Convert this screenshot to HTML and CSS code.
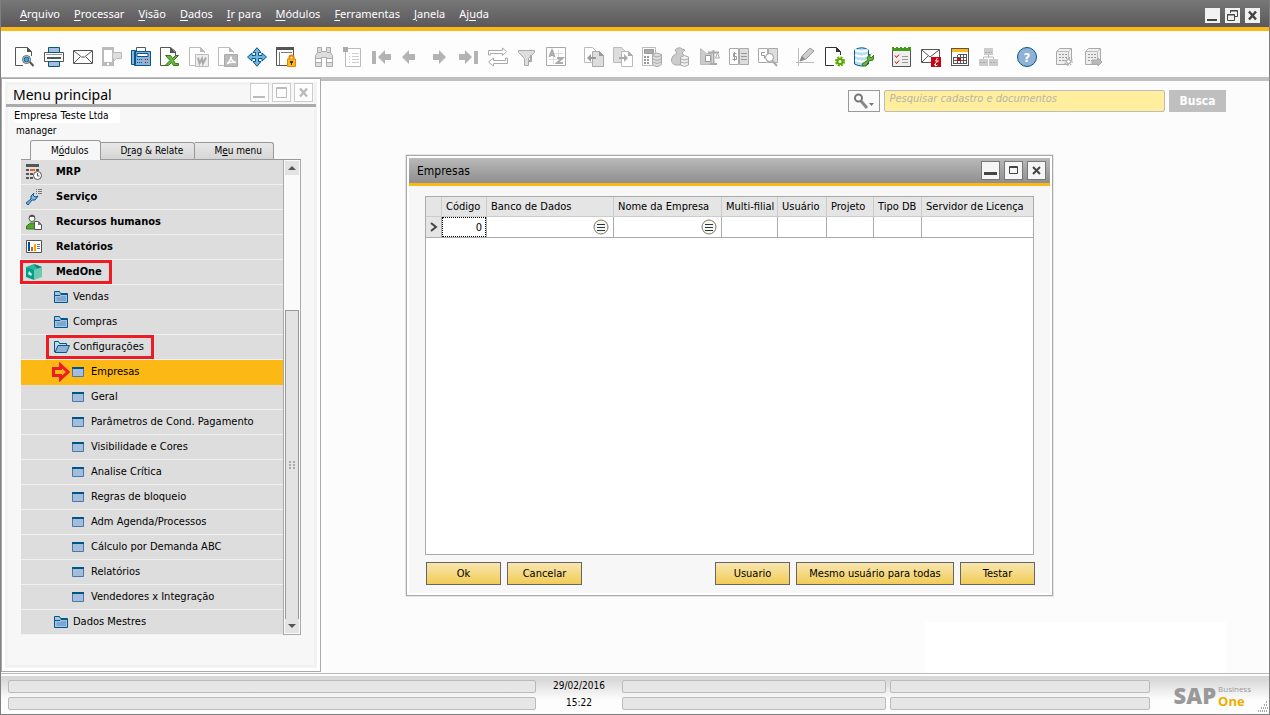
FILE: index.html
```html
<!DOCTYPE html>
<html lang="pt-BR">
<head>
    <meta charset="UTF-8">
    <meta name="viewport" content="width=device-width, initial-scale=1.0">
    <title>SAP Business One</title>
    <link rel="stylesheet" href="styles.css">
</head>
<body>
    <!-- Shared icons -->
    <svg class="sprite" aria-hidden="true">
        <symbol id="folder" viewBox="0 0 14 12">
            <path d="M.5 11.500V.5h5l1 2h7v9z" fill="#a8c4de" stroke="#00588c"/>
            <path d="M1 4.500h5l1-1h6" fill="none" stroke="#00588c"/>
            <path d="M2.500 6h4l1-1h4.500v5h-9.500z" fill="#7fa6cc"/>
        </symbol>
        <symbol id="folder-open" viewBox="0 0 16 12">
            <path d="M.5 11V.5h4l1 2h7v2" fill="#c5d8ea" stroke="#00588c"/>
            <path d="M1 11.500l3-7h11.500l-3 7z" fill="#8fb2d6" stroke="#00588c"/>
        </symbol>
        <symbol id="form" viewBox="0 0 12 10">
            <path d="M.5 1h11v8.500H.5z" fill="#a3bddb" stroke="#4a78a8"/>
            <path d="M0 0h12v2H0z" fill="#005587"/>
        </symbol>
        <symbol id="minimize" viewBox="0 0 15 13"><path d="M1 10h12v2H1z" fill="currentColor"/></symbol>
        <symbol id="close" viewBox="0 0 15 13"><path d="M4 2.500l7 8M11 2.500l-7 8" stroke="currentColor" stroke-width="2.500"/></symbol>
        <symbol id="link" viewBox="0 0 16 16">
            <circle cx="8" cy="8" r="7" fill="#fbf8e6" stroke="#777"/>
            <path d="M4 5.500h8M4 8.500h8M4 11.500h8" stroke="#1d3557" shape-rendering="crispEdges"/>
        </symbol>
    </svg>

    <header>
        <nav class="menubar">
            <a href="#"><u>A</u>rquivo</a>
            <a href="#"><u>P</u>rocessar</a>
            <a href="#"><u>V</u>isão</a>
            <a href="#"><u>D</u>ados</a>
            <a href="#"><u>I</u>r para</a>
            <a href="#"><u>M</u>ódulos</a>
            <a href="#"><u>F</u>erramentas</a>
            <a href="#"><u>J</u>anela</a>
            <a href="#">Aj<u>u</u>da</a>
            <div class="app-controls">
                <button aria-label="Minimizar"><svg viewBox="0 0 15 13"><path d="M2 10h10v2H2z" fill="#444"/></svg></button>
                <button aria-label="Restaurar"><svg viewBox="0 0 15 13" fill="none" stroke="#444"><path d="M5.500 4V1.500h7v6H10M5 2h8"/><path d="M2.500 5.500h7v6h-7zM2 6h8"/></svg></button>
                <button aria-label="Fechar"><svg><use href="#close"/></svg></button>
            </div>
        </nav>

        <div class="toolbar">
            <div class="group">
                <button aria-label="Visualizar"><svg viewBox="0 0 20 20"><path d="M8 18.500H.5V.5h12l4 4V9" fill="#fff" stroke="#555"/><path d="M12 0v5h5z" fill="#555"/><path d="M14 14l4.500 5" stroke="#555" stroke-width="2"/><circle cx="11.500" cy="12.500" r="4" fill="#fff" stroke="#555"/><circle cx="11.500" cy="12.500" r="2.500" fill="#4f9fd0" stroke="#00588c"/></svg></button>
                <button aria-label="Imprimir"><svg viewBox="0 0 20 20"><path d="M.5 5.500h19v9H.5z" fill="#fff" stroke="#555"/><path d="M4.500.5h11v5h-11z" fill="#a3bddb" stroke="#00588c"/><path d="M2 7.500h16" stroke="#999"/><path d="M3 10h14v2H3z" fill="#555"/><path d="M4.500 14.500h11v5h-11z" fill="#a3bddb" stroke="#00588c"/></svg></button>
                <button aria-label="Enviar e-mail"><svg viewBox="0 0 20 20" fill="none" stroke="#555"><path d="M.5 3.500h19v13H.5z" fill="#fff"/><path d="M1 4l7.500 6h3L19 4M1 16l6-6M19 16l-6-6"/></svg></button>
                <button aria-label="Enviar SMS" disabled><svg viewBox="0 0 20 20"><path d="M1 1h10v17H1z" fill="#fff" stroke="#bbb" stroke-width="2"/><path d="M0 0h12v3H0zM0 15h12v4H0z" fill="#bbb"/><path d="M5 16h2v2H5z" fill="#fff"/><path d="M10.500 5.500h9v6h-5l-3 3v-3h-1z" fill="#ddd" stroke="#bbb"/></svg></button>
                <button aria-label="Enviar fax"><svg viewBox="0 0 20 20"><path d="M5.500.5h9v4h-9z" fill="#fff" stroke="#555"/><path d="M.5 3.500h4v14h-4zM3.500 4.500h16v14h-16z" fill="#8fb2d6" stroke="#00588c"/><path d="M6 6.500h11v3H6z" fill="#fff" stroke="#00588c"/><path d="M6 12.500h6M6 15.500h6" stroke="#00588c" stroke-dasharray="1 1"/><path d="M14 12.500h1m1 0h1M14 15.500h1" stroke="#d00000"/><path d="M16 15.500h1" stroke="#2a8a00"/></svg></button>
                <button aria-label="Exportar para Excel"><svg viewBox="0 0 20 20"><path d="M5 18.500H.5V.5h10l5 4V9" fill="#fff" stroke="#555"/><path d="M10 0v6h6z" fill="#555"/><path d="M5.500 8.500h5l2 3 3-3h3l-5 5 2 3h3v2h-5l-2-3-3 3H5l5-5z" fill="#6cb33f" stroke="#2f7d12"/></svg></button>
                <button aria-label="Exportar para Word" disabled><svg viewBox="0 0 20 20"><path d="M6 18.500H.5V.5h11l4 4V6" fill="#fff" stroke="#bbb"/><path d="M11 0v5h5z" fill="#bbb"/><path d="M6.500 7.500h13v12h-13z" fill="#eee" stroke="#bbb"/><path d="M9 10.500l1.500 6 2.500-5 1 5 3-6" fill="none" stroke="#aaa" stroke-width="2"/></svg></button>
                <button aria-label="Exportar para PDF" disabled><svg viewBox="0 0 20 20"><path d="M6 18.500H.5V.5h11l4 4V6" fill="#fff" stroke="#bbb"/><path d="M11 0v5h5z" fill="#bbb"/><path d="M6.500 7.500h13v12h-13z" fill="#bbb" stroke="#aaa"/><path d="M9 16.500q4-3 4-7 0 5 5 6-5-1-9 1" fill="none" stroke="#fff" stroke-width="1.500"/></svg></button>
                <button aria-label="Iniciar aplicação"><svg viewBox="0 0 20 20"><path d="M10 .7l4 4.800h-2.500v3h3.500v-2.500l4.500 4-4.500 4v-2.500h-3.500v3H14l-4 4.800-4-4.800h2.500v-3H5V14L.5 10 5 6v2.500h3.500v-3H6z" fill="#72b6e6" stroke="#00588c"/></svg></button>
                <button aria-label="Bloquear tela"><svg viewBox="0 0 20 20"><path d="M.5.5h17v18H.5z" fill="#fff" stroke="#555"/><path d="M0 0h18v3H0z" fill="#555"/><path d="M3.500 5v13M5 5.500h11" stroke="#777"/><path d="M13.500 12V9.500q2-2 4 0V12" fill="none" stroke="#e98300" stroke-width="2"/><path d="M11.500 12h8v7.500h-8z" fill="#fcb814" stroke="#e98300"/><path d="M14 14h3v2h-1v2h-1v-2h-1z" fill="#333"/></svg></button>
            </div>
            <div class="group">
                <button aria-label="Procurar" disabled><svg viewBox="0 0 20 20"><path d="M3.500.5h4v4h5v-4h4v5l2 3v11h-6v-9h-5v9h-6v-11l2-3z" fill="#ddd" stroke="#aaa"/><path d="M2 12h5v3H2zM13 12h5v3h-5z" fill="#fff"/><path d="M2 11.500h5M13 11.500h5M2 15.500h5M13 15.500h5M4 5.500h3M13 5.500h3" stroke="#aaa"/></svg></button>
                <button aria-label="Adicionar" disabled><svg viewBox="0 0 20 20"><path d="M2.500 1.500h15v18h-15z" fill="#fff" stroke="#bbb"/><path d="M0 0h5v5H0z" fill="#aaa"/><path d="M6 6.500h1m2 0h7M6 9.500h1m2 0h7M6 12.500h1m2 0h7M6 15.500h1m2 0h7" stroke="#ccc"/></svg></button>
                <button aria-label="Primeiro registro" disabled><svg viewBox="0 0 20 20" fill="#b3b3b3"><path d="M0 4h4v13H0zM6 10l7-7v4h6v6h-6v4z"/></svg></button>
                <button aria-label="Registro anterior" disabled><svg viewBox="0 0 20 20" fill="#b3b3b3"><path d="M1 10l7-7v4h6v6H8v4z"/></svg></button>
                <button aria-label="Próximo registro" disabled><svg viewBox="0 0 20 20" fill="#b3b3b3"><path d="M16 10L9 3v4H3v6h6v4z"/></svg></button>
                <button aria-label="Último registro" disabled><svg viewBox="0 0 20 20" fill="#b3b3b3"><path d="M15 4h4v13h-4zM13 10L6 3v4H0v6h6v4z"/></svg></button>
                <button aria-label="Atualizar" disabled><svg viewBox="0 0 20 20" fill="#fff" stroke="#aaa"><path d="M.5 8V3.500h14V1l4 3.500-4 4V6.500h-12V8zM19.500 11v5.500h-14V19l-5-4 5-4v2.500h12V11z"/></svg></button>
                <button aria-label="Filtrar" disabled><svg viewBox="0 0 20 20"><path d="M1.500 3.500h16v2l-6 6v7h-4v-7l-6-6z" fill="#ddd" stroke="#aaa"/><path d="M12 14h2V8" fill="none" stroke="#aaa" stroke-width="2"/></svg></button>
                <button aria-label="Ordenar" disabled><svg viewBox="0 0 20 20"><path d="M.5.5h19v18H.5z" fill="#fff" stroke="#aaa"/><path d="M3 6.500h14M3 12.500h14M7.500 3v14M12.500 3v14" stroke="#ddd"/><path d="M3.500 10L6 3.500 8.500 10M4 8h4M11 11h5.500L11 16h6" fill="none" stroke="#aaa" stroke-width="2"/></svg></button>
            </div>
            <div class="group">
                <button aria-label="Documento base" disabled><svg viewBox="0 0 20 20"><path d="M.5.5h8l4 4v11H.5z" fill="#fff" stroke="#bbb"/><path d="M8.500 4.500h7l4 4v11h-11z" fill="#ddd" stroke="#aaa"/><path d="M15 4v5h5zM3 11l4-4v3h5v2H7v3z" fill="#999"/></svg></button>
                <button aria-label="Documento destino" disabled><svg viewBox="0 0 20 20"><path d="M.5.5h8l4 4v11H.5z" fill="#ddd" stroke="#bbb"/><path d="M8.500 4.500h7l4 4v11h-11z" fill="#fff" stroke="#bbb"/><path d="M15 4v5h5zM15 11l-4-4v3H6v2h5v3z" fill="#aaa"/></svg></button>
                <button aria-label="Lucro bruto" disabled><svg viewBox="0 0 20 20"><path d="M.5.5h13v18H.5z" fill="#fff" stroke="#bbb"/><path d="M2.500 2.500h9v4h-9z" fill="#aaa" stroke="#999"/><path d="M2 10h6M2 13h6M2 16h6" stroke="#999" stroke-width="2" stroke-dasharray="2 1"/><path d="M10.500 7.500q4.500-3 9 0v10q-4.500 4-9 0z" fill="#ddd" stroke="#aaa"/><path d="M10.500 8.500q4.500 3 9 0M10.500 12q4.500 3 9 0M10.500 15q4.500 3 9 0" fill="none" stroke="#aaa"/></svg></button>
                <button aria-label="Meios de pagamento" disabled><svg viewBox="0 0 20 20"><path d="M4 3q4-4 7-1l3 1-3 3q5 4 3 12H4q-6-3-2-9l4-3z" fill="#ccc" stroke="#aaa"/><path d="M9.500 10q4-3 8 0v8q-4 3-8 0z" fill="#eee" stroke="#aaa"/><path d="M9.500 12q4 2 8 0M9.500 15q4 2 8 0" fill="none" stroke="#aaa"/></svg></button>
                <button aria-label="Volume e peso" disabled><svg viewBox="0 0 20 20"><path d="M.5 17.500v-16l6 5h5v11z" fill="#ccc" stroke="#bbb"/><path d="M5.500 8.500h5v6h-5z" fill="#fff" stroke="#999"/><path d="M13.500 3v14M8 5.500h11M10 17h7" stroke="#aaa" stroke-width="2"/><path d="M15.500 11l2-5 2 5z" fill="#fff" stroke="#aaa"/></svg></button>
                <button aria-label="Diário" disabled><svg viewBox="0 0 20 20"><path d="M.5 1.500h9v16h-9z" fill="#fff" stroke="#aaa"/><path d="M10.500 1.500h9v16h-9z" fill="#ddd" stroke="#aaa"/><path d="M7.500 6.500h-3v3h3v3h-4M5.500 5v9M12 6.500h6M12 9.500h6M12 12.500h6" fill="none" stroke="#999"/></svg></button>
                <button aria-label="Visualizar diário" disabled><svg viewBox="0 0 20 20"><path d="M.5 1.500h9v14h-9z" fill="#fff" stroke="#aaa"/><path d="M10.500 1.500h9v14h-9z" fill="#ddd" stroke="#aaa"/><path d="M7 5.500H3.500v3h3v3" fill="none" stroke="#999"/><circle cx="11.500" cy="10.500" r="4" fill="#fff" stroke="#999"/><path d="M14.500 14l4.500 5" stroke="#aaa" stroke-width="2"/></svg></button>
            </div>
            <div class="group">
                <button aria-label="Editor de layout" disabled><svg viewBox="0 0 20 20"><path d="M2.500 1v18M0 15.500h18" fill="none" stroke="#bbb"/><path d="M4 14l2-5 8-8 4 3-8 8z" fill="#ccc" stroke="#999"/><path d="M4 14l2-5 3 3z" fill="#888"/></svg></button>
                <button aria-label="Configurações do formulário"><svg viewBox="0 0 20 20"><path d="M9 18.500H.5V.5h11l4 4V8" fill="#fff" stroke="#333"/><path d="M11 0v5h5z" fill="#333"/><circle cx="15" cy="14.500" r="2.500" fill="none" stroke="#5aa800" stroke-width="2"/><circle cx="15" cy="14.500" r="4" fill="none" stroke="#5aa800" stroke-width="2" stroke-dasharray="2 1.140"/></svg></button>
                <button aria-label="Gerenciador de consultas"><svg viewBox="0 0 20 20"><path d="M.5 3q7.500-4.500 14 0v14q-6.500 4-14 0z" fill="#b8dcf4" stroke="#00588c"/><path d="M1 3q7 3 13 0M1 8q7 3 13 0M1 13q7 3 13 0" fill="none" stroke="#fff" stroke-width="2"/><path d="M16 7l-3 4 1 2-6 4 1 2h3l3-5 4-1 1-5-3 3-1-1z" fill="#6cb33f" stroke="#2f7d12"/></svg></button>
            </div>
            <div class="group">
                <button aria-label="Atividades"><svg viewBox="0 0 20 20"><path d="M.5 1.500h18v18H.5z" fill="#eee" stroke="#555"/><path d="M0 0h2v1h2V0h2v1h2V0h2v1h2V0h2v1h2V0h3v4H0z" fill="#45981c"/><path d="M3 8.500l1.500 2L7 7.500M3 14.500l1.500 2L7 13.500" fill="none" stroke="#d00000"/><path d="M10 9.500h6M10 12.500h6M10 15.500h6" stroke="#999"/></svg></button>
                <button aria-label="Alertas"><svg viewBox="0 0 20 20"><path d="M.5 2.500h18v13H.5z" fill="#fff" stroke="#555"/><path d="M1 3l8 7 9-7M1 15l6-6" fill="none" stroke="#555"/><path d="M10 10h10v10H10z" fill="#cc0010"/><path d="M16.500 11l-2 3h3l-3 2v3m-1-2l1 2 2-1" fill="none" stroke="#fff"/></svg></button>
                <button aria-label="Calendário"><svg viewBox="0 0 20 20" shape-rendering="crispEdges"><path d="M1.500 1.500h17v17h-17z" fill="#fff" stroke="#555"/><path d="M2 2h16v3H2z" fill="#fcb814"/><path d="M7.500 7.500h9v9h-13v-6h13M4 13.500h13M7.500 7.500v9M10.500 7.500v9M13.500 7.500v9" fill="none" stroke="#555"/><path d="M7 11h4v3H7z" fill="#cc0010"/></svg></button>
                <button aria-label="Mapa de relações" disabled><svg viewBox="0 0 20 20"><path d="M9.500 8v3M4.500 12v-2h10v2" fill="none" stroke="#bbb"/><path d="M5 1h9v7H5zM0 12h9v7H0zM10 12h9v7h-9z" fill="#ccc"/><path d="M6 5.500h7M1 15.500h7M11 15.500h7" stroke="#aaa" stroke-dasharray="2 1"/></svg></button>
            </div>
            <div class="group">
                <button aria-label="Ajuda"><svg viewBox="0 0 20 20"><circle cx="10" cy="10" r="9.500" fill="#8fb2d6" stroke="#00588c"/><text x="10" y="15" class="help-mark">?</text></svg></button>
            </div>
            <div class="group">
                <button aria-label="Configurar servidor" disabled><svg viewBox="0 0 20 20"><path d="M1.500 4.500l3-3h12v12l-3 4h-12z" fill="#eee" stroke="#aaa"/><path d="M1.500 4.500h12v13M13.500 4.500l3-3" fill="none" stroke="#bbb"/><path d="M4 7.500h8M4 10.500h8M4 13.500h8" stroke="#999" stroke-dasharray="2 1"/><circle cx="13.500" cy="14.500" r="2" fill="#fff" stroke="#aaa"/><circle cx="13.500" cy="14.500" r="3.500" fill="none" stroke="#aaa" stroke-width="2" stroke-dasharray="1 1.750"/></svg></button>
                <button aria-label="Conectar servidor" disabled><svg viewBox="0 0 20 20"><path d="M1.500 4.500l3-3h12v12l-3 4h-12z" fill="#eee" stroke="#aaa"/><path d="M1.500 4.500h12v13M13.500 4.500l3-3" fill="none" stroke="#bbb"/><path d="M4 7.500h8M4 10.500h8M4 13.500h8" stroke="#999" stroke-dasharray="2 1"/><path d="M8 13h6v-2l4 4-4 4v-2H8z" fill="#bbb" stroke="#aaa"/></svg></button>
            </div>
        </div>
    </header>

    <main class="desktop">
        <!-- Main menu -->
        <aside class="main-menu">
            <div class="menu-title">
                <h1>Menu principal</h1>
                <button aria-label="Minimizar menu"><svg><use href="#minimize"/></svg></button>
                <button aria-label="Maximizar menu"><svg viewBox="0 0 15 13"><path d="M2.500 1.500h10v10h-10zM2 2.500h11" fill="none" stroke="currentColor"/></svg></button>
                <button aria-label="Fechar menu"><svg><use href="#close"/></svg></button>
            </div>
            <div class="company">
                <p><span class="company-name">Empresa Teste</span> Ltda</p>
                <p class="user">manager</p>
            </div>
            <div class="tabs">
                <button class="tab active">M<u>ó</u>dulos</button>
                <button class="tab">D<u>r</u>ag &amp; Relate</button>
                <button class="tab">M<u>e</u>u menu</button>
            </div>
            <div class="tree-box">
                <ul class="tree">
                    <li class="module"><a href="#"><svg viewBox="0 0 16 16"><path d="M0 0h13v3H0z" fill="#555"/><path d="M0 5h3v2H0zM4 9h3v2H4zM0 9h3v2H0zM0 13h3v2H0zM4 13h3v2H4zM10 5h3v2h-3z" fill="#555"/><path d="M4 5h5v2H4z" fill="#e9631a"/><circle cx="11.500" cy="11.500" r="4" fill="#fff" stroke="#555"/><path d="M11.500 9v3h2" fill="none" stroke="#555"/></svg>MRP</a></li>
                    <li class="module"><a href="#"><svg viewBox="0 0 16 16"><path d="M8 4L5 7v3l-5 4 2 2 4-5 3 0 3-4-3 1-2-2z" fill="#8fb2d6" stroke="#00588c"/><path d="M10 .5h1m1 0h4M10 2.500h1m1 0h4M10 4.500h1m1 0h4" stroke="#777"/></svg>Serviço</a></li>
                    <li class="module"><a href="#"><svg viewBox="0 0 16 16"><path d="M.5 15v-3l4-3h4l3 3v3z" fill="#55a52a" stroke="#2f7d12"/><circle cx="6" cy="4.500" r="3" fill="#fff" stroke="#555"/><path d="M3 5V2q3-3 6 0v3L8 3H4z" fill="#555"/><path d="M8.500 7.500h4l3 3v5h-7z" fill="#fff" stroke="#555"/><path d="M12 7v4h4z" fill="#777"/></svg>Recursos humanos</a></li>
                    <li class="module"><a href="#"><svg viewBox="0 0 16 16"><path d="M.5 1.500h15v12H.5z" fill="#fff" stroke="#555"/><path d="M2 3h2v9H2z" fill="#0050a0"/><path d="M5 8h2v4H5z" fill="#e9531a"/><path d="M8 5h2v7H8z" fill="#f7a600"/><path d="M11 5.500h3M11 7.500h3M11 9.500h3" stroke="#777"/></svg>Relatórios</a></li>
                    <li class="module"><a href="#"><svg viewBox="0 0 16 16"><path d="M0 3l8 2v11l-8-3z" fill="#00a08c"/><path d="M8 5l8-2v10l-8 3z" fill="#6fc9ae"/><path d="M0 3l8-3 8 3-8 3z" fill="#2cb59b"/><path d="M8 0l8 3-5 1.500z" fill="#00877a"/><path d="M3 7l3 3-1 2-3-2z" fill="#c8f0e6"/></svg>MedOne</a><i class="mark mark-module"></i></li>
                    <li class="folder"><a href="#"><svg><use href="#folder"/></svg>Vendas</a></li>
                    <li class="folder"><a href="#"><svg><use href="#folder"/></svg>Compras</a></li>
                    <li class="folder"><a href="#"><svg class="open"><use href="#folder-open"/></svg>Configurações</a><i class="mark mark-folder"></i></li>
                    <li class="item selected"><a href="#"><svg><use href="#form"/></svg>Empresas</a><svg class="arrow" viewBox="0 0 18 20"><path d="M1.500 6.500h7V3l7.500 7-7.500 7v-3.500h-7z" fill="none" stroke="#ed1c24" stroke-width="3"/></svg></li>
                    <li class="item"><a href="#"><svg><use href="#form"/></svg>Geral</a></li>
                    <li class="item"><a href="#"><svg><use href="#form"/></svg>Parâmetros de Cond. Pagamento</a></li>
                    <li class="item"><a href="#"><svg><use href="#form"/></svg>Visibilidade e Cores</a></li>
                    <li class="item"><a href="#"><svg><use href="#form"/></svg>Analise Crítica</a></li>
                    <li class="item"><a href="#"><svg><use href="#form"/></svg>Regras de bloqueio</a></li>
                    <li class="item"><a href="#"><svg><use href="#form"/></svg>Adm Agenda/Processos</a></li>
                    <li class="item"><a href="#"><svg><use href="#form"/></svg>Cálculo por Demanda ABC</a></li>
                    <li class="item"><a href="#"><svg><use href="#form"/></svg>Relatórios</a></li>
                    <li class="item"><a href="#"><svg><use href="#form"/></svg>Vendedores x Integração</a></li>
                    <li class="folder"><a href="#"><svg><use href="#folder"/></svg>Dados Mestres</a></li>
                </ul>
                <div class="scrollbar">
                    <button aria-label="Rolar para cima"><svg viewBox="0 0 8 4"><path d="M0 4l4-4 4 4z" fill="#555"/></svg></button>
                    <div class="thumb"><svg viewBox="0 0 6 8"><path d="M1 0v8M5 0v8" stroke="#aaa" stroke-width="2" stroke-dasharray="2 1"/></svg></div>
                    <button aria-label="Rolar para baixo"><svg viewBox="0 0 8 4"><path d="M0 0l4 4 4-4z" fill="#555"/></svg></button>
                </div>
            </div>
        </aside>

        <section class="workspace">
            <form class="search">
                <button type="button" class="search-type" aria-label="Tipo de busca"><svg viewBox="0 0 22 16"><circle cx="5.500" cy="5" r="3.500" fill="#fff" stroke="#777" stroke-width="2"/><path d="M8 8l6 7" stroke="#888" stroke-width="3"/><path d="M16 10h5l-2.500 3z" fill="#777"/></svg></button>
                <input type="text" aria-label="Pesquisar" placeholder="Pesquisar cadastro e documentos">
                <button type="submit" class="search-btn">Busca</button>
            </form>

            <!-- Empresas window -->
            <div class="window">
                <div class="window-title">
                    <h2>Empresas</h2>
                    <button aria-label="Minimizar"><svg viewBox="0 0 15 13"><path d="M1 8h13v3H1z" fill="#444"/></svg></button>
                    <button aria-label="Maximizar"><svg viewBox="0 0 15 13"><path d="M3.500 2.500h8v7h-8zM3 3.500h9" fill="none" stroke="#444"/></svg></button>
                    <button aria-label="Fechar"><svg viewBox="0 0 15 13"><path d="M4 3l7 7M11 3l-7 7" stroke="#444" stroke-width="2"/></svg></button>
                </div>
                <div class="window-body">
                    <div class="grid-box">
                        <table>
                            <thead>
                                <tr>
                                    <th class="col-mark"></th>
                                    <th class="col-code">Código</th>
                                    <th class="col-db">Banco de Dados</th>
                                    <th class="col-name">Nome da Empresa</th>
                                    <th class="col-branch">Multi-filial</th>
                                    <th class="col-user">Usuário</th>
                                    <th class="col-project">Projeto</th>
                                    <th class="col-type">Tipo DB</th>
                                    <th>Servidor de Licença</th>
                                </tr>
                            </thead>
                            <tbody>
                                <tr>
                                    <td class="row-mark"><svg viewBox="0 0 8 10"><path d="M1 1l5 4-5 4" fill="none" stroke="#444" stroke-width="2"/></svg></td>
                                    <td class="current"><input type="text" aria-label="Código" value="0"></td>
                                    <td class="lookup"><button aria-label="Escolher banco de dados"><svg><use href="#link"/></svg></button></td>
                                    <td class="lookup"><button aria-label="Escolher empresa"><svg><use href="#link"/></svg></button></td>
                                    <td></td>
                                    <td></td>
                                    <td></td>
                                    <td></td>
                                    <td></td>
                                </tr>
                            </tbody>
                        </table>
                    </div>
                    <div class="actions">
                        <button>Ok</button>
                        <button>Cancelar</button>
                        <button class="push">Usuario</button>
                        <button class="wide">Mesmo usuário para todas</button>
                        <button>Testar</button>
                    </div>
                </div>
            </div>
        </section>
    </main>

    <footer class="statusbar">
        <div class="field"></div>
        <span>29/02/2016</span>
        <div class="field"></div>
        <div class="field"></div>
        <div class="logo">
            <strong>SAP</strong>
            <div class="product"><span>Business</span><b>One</b></div>
        </div>
        <div class="field"></div>
        <span>15:22</span>
        <div class="field"></div>
        <div class="field"></div>
        <svg class="grip" viewBox="0 0 12 12"><path d="M10 1h2M8 4h4M5 7h7M2 10h10" stroke="#555" stroke-width="1" stroke-dasharray="1 1"/></svg>
    </footer>
</body>
</html>
```
FILE: styles.css
```css
* {
    box-sizing: border-box;
}
body {
    margin: 0;
    min-height: 100vh;
    display: flex;
    flex-direction: column;
    border: 1px solid #808080;
    border-top: none;
    background: #fdfdfd;
    font-family: "DejaVu Sans Condensed", "DejaVu Sans", Tahoma, sans-serif;
    font-size: 11px;
    line-height: 16px;
    color: #000;
}
button, input {
    font: inherit;
    color: inherit;
    margin: 0;
    padding: 0;
}
button {
    cursor: pointer;
}
a {
    color: inherit;
    text-decoration: none;
}
h1, h2, p, ul {
    margin: 0;
    padding: 0;
    font-weight: normal;
}
svg {
    display: block;
}
.sprite {
    position: absolute;
    width: 0;
    height: 0;
}

/* Menu bar */
.menubar {
    display: flex;
    align-items: center;
    gap: 14px;
    height: 31px;
    padding: 0 9px 0 19px;
    background: linear-gradient(#787878, #5b585b);
    border-bottom: 4px solid #fcb814;
    color: #fff;
    font-family: "Noto Sans", "Open Sans", sans-serif;
    font-size: 11px;
}
.menubar u {
    text-underline-offset: 2px;
}
.app-controls {
    display: flex;
    gap: 5px;
    margin: 3px 0 0 auto;
}
.app-controls button {
    width: 15px;
    height: 15px;
    border: none;
    background: #f2f2f2;
    color: #444;
}
.app-controls svg {
    width: 15px;
    height: 13px;
}

/* Toolbar */
.toolbar {
    display: flex;
    gap: 9px;
    height: 50px;
    padding: 11px 0 0 9px;
    border-bottom: 4px solid #bfbfbf;
}
.group {
    display: flex;
}
.group button {
    display: flex;
    align-items: center;
    width: 29px;
    height: 30px;
    padding-left: 5px;
    border: none;
    background: none;
}
.group svg {
    width: 20px;
    height: 20px;
}
.help-mark {
    fill: #fff;
    font-size: 13px;
    font-weight: bold;
    text-anchor: middle;
}

/* Desktop */
.desktop {
    flex: 1;
    display: flex;
}
.main-menu {
    position: relative;
    flex: none;
    width: 320px;
    margin: -3px 0 1px;
    padding: 4px;
    background: #f7f7f7;
    border: 1px solid #aaa;
    box-shadow: inset 0 0 0 3px #fff, inset 0 0 0 6px #f2f2f2;
}
.menu-title {
    display: flex;
    align-items: center;
    gap: 3px;
    height: 24px;
    padding: 0 3px 0 7px;
    border-bottom: 3px solid #aaa;
}
.menu-title h1 {
    flex: 1;
    padding-top: 3px;
    font-family: "Noto Sans", "Open Sans", sans-serif;
    font-size: 14px;
}
.menu-title button {
    width: 19px;
    height: 19px;
    margin-bottom: 2px;
    border: 1px solid #ccc;
    background: #fdfdfd;
    color: #bbb;
}
.menu-title svg {
    width: 15px;
    height: 13px;
    margin: 0 auto;
}
.company {
    padding: 2px 8px 0;
    line-height: 14px;
}
.company p:first-child {
    width: 106px;
    background: #fff;
    white-space: nowrap;
    font-size: 10px;
}
.company .company-name {
    font-size: 11px;
}
.company .user {
    padding: 1px 0 0 2px;
    font-size: 10px;
}
.tabs {
    display: flex;
    align-items: flex-end;
    height: 21px;
    margin: 1px 15px 0;
    padding-left: 9px;
    border-bottom: 1px solid #999;
    font-size: 10px;
}
.tab {
    height: 17px;
    padding: 0 11px 0 19px;
    border: 1px solid #999;
    border-left: none;
    border-bottom: none;
    border-radius: 0 3px 0 0;
    background: linear-gradient(#e8e8e8, #d5d5d5);
    white-space: nowrap;
}
.tab.active {
    height: 20px;
    margin-bottom: -1px;
    padding: 0 12px 0 20px;
    border-left: 1px solid #999;
    border-radius: 3px 3px 0 0;
    background: #f7f7f7;
}
.tree-box {
    display: flex;
    margin: 0 15px;
}
.tree {
    flex: 1;
    list-style: none;
}
.tree li {
    position: relative;
    height: 25px;
    background: #ddd;
    border-bottom: 1px solid #f0f0f0;
}
.tree a {
    display: flex;
    align-items: center;
    height: 24px;
}
.tree .module {
    padding-left: 5px;
    font-weight: bold;
}
.module a svg {
    width: 16px;
    height: 16px;
    margin-right: 14px;
}
.tree .folder {
    padding-left: 33px;
}
.folder a svg {
    width: 14px;
    height: 12px;
    margin-right: 5px;
}
.folder a .open {
    width: 16px;
    margin-right: 3px;
}
.tree .item {
    padding-left: 51px;
}
.item a svg {
    width: 12px;
    height: 10px;
    margin-right: 7px;
}
.tree .selected {
    background: #fcb814;
    border-color: #fcb814;
}

/* Red highlights over the tree */
.mark {
    position: absolute;
    top: 0;
    height: 24px;
    border: 3px solid #ed1c24;
    pointer-events: none;
}
.mark-module {
    left: -1px;
    width: 92px;
}
.mark-folder {
    left: 25px;
    width: 108px;
}
.arrow {
    position: absolute;
    left: 31px;
    top: 2px;
    width: 18px;
    height: 20px;
}
.scrollbar {
    display: flex;
    flex-direction: column;
    width: 18px;
    padding: 1px;
    border: 1px solid #aaa;
    border-top: none;
    background: #fafafa;
}
.scrollbar button {
    display: flex;
    justify-content: center;
    align-items: center;
    height: 14px;
    border: none;
    background: #e3e3e3;
}
.scrollbar button svg {
    width: 8px;
    height: 4px;
}
.thumb {
    flex: 1;
    display: flex;
    justify-content: center;
    align-items: center;
    margin-top: 135px;
    border: 1px solid #999;
    border-bottom: none;
    background: #e3e3e3;
}
.thumb svg {
    width: 6px;
    height: 8px;
}

/* Workspace */
.workspace {
    flex: 1;
    display: flex;
    flex-direction: column;
    background: linear-gradient(#fff, #fff) right 41px bottom / 301px 51px no-repeat #fcfcfc;
    border-right: 2px solid #fff;
}
.search {
    display: flex;
    gap: 4px;
    padding: 9px 41px 10px 0;
}
.search-type {
    display: flex;
    align-items: center;
    width: 32px;
    height: 22px;
    margin-left: auto;
    padding-left: 4px;
    border: 1px solid #999;
    background: #fafafa;
}
.search-type svg {
    width: 22px;
    height: 16px;
}
.search input {
    width: 31%;
    height: 22px;
    padding: 0 4px 5px;
    border: 1px solid #bbb;
    border-radius: 2px;
    background: #feee9e;
}
.search input::placeholder {
    color: #b9b6a4;
    font-style: italic;
}
.search-btn {
    width: 57px;
    height: 22px;
    border: none;
    background: #bfbfbf;
    color: #fff;
    font-size: 12px;
    font-weight: bold;
}
.window {
    flex: 1;
    display: flex;
    flex-direction: column;
    margin: 33px 214px 77px 85px;
    padding: 2px;
    border: 1px solid #aaa;
    background: #fff;
    box-shadow: 0 0 0 1px #e5e5e5;
}
.window-title {
    display: flex;
    align-items: center;
    gap: 4px;
    height: 28px;
    padding: 0 4px 0 8px;
    background: linear-gradient(#b9b9b9, #8f8f8f);
    border-bottom: 3px solid #fcb814;
}
.window-title h2 {
    flex: 1;
    font-size: 12px;
}
.window-title button {
    width: 19px;
    height: 19px;
    border: 1px solid #777;
    background: #f5f5f5;
    color: #444;
}
.window-title svg {
    width: 15px;
    height: 13px;
    margin: 0 auto;
}
.window-body {
    flex: 1;
    display: flex;
    flex-direction: column;
    padding: 10px 16px 8px;
    background: #f7f7f7;
}
.grid-box {
    flex: 1;
    border: 1px solid #aaa;
    background: #fff;
}
table {
    width: 100%;
    table-layout: fixed;
    border-collapse: separate;
    border-spacing: 0;
}
th {
    height: 20px;
    padding: 1px 0 0 4px;
    border-right: 1px solid #ccc;
    border-bottom: 1px solid #ccc;
    background: #e5e5e5;
    font-weight: normal;
    text-align: left;
    white-space: nowrap;
}
td {
    height: 21px;
    padding: 0;
    border-right: 1px solid #aaa;
    border-bottom: 1px solid #aaa;
}
th:last-child, td:last-child {
    border-right: none;
}
.col-mark {
    width: 16px;
}
.col-code {
    width: 45px;
}
.col-db {
    width: 127px;
}
.col-name {
    width: 108px;
}
.col-branch {
    width: 56px;
}
.col-user {
    width: 49px;
}
.col-project {
    width: 47px;
}
.col-type {
    width: 48px;
}
.row-mark {
    padding-left: 4px;
    background: #e5e5e5;
}
.row-mark svg {
    width: 8px;
    height: 10px;
}
.current input {
    display: block;
    width: 100%;
    height: 20px;
    padding-right: 3px;
    border: 1px dotted #000;
    background: #fff;
    text-align: right;
}
.lookup button {
    display: block;
    width: 16px;
    height: 16px;
    margin: 0 4px 0 auto;
    border: none;
    background: none;
}
.lookup svg {
    width: 16px;
    height: 16px;
}
.actions {
    display: flex;
    gap: 6px;
    margin: 0 -1px 0 1px;
    padding-top: 7px;
}
.actions button {
    width: 75px;
    height: 23px;
    border: 1px solid #666;
    background: linear-gradient(#f8e6b0, #f2cc55);
}
.actions .push {
    margin-left: auto;
}
.actions .wide {
    width: 158px;
}

/* Status bar */
.statusbar {
    position: relative;
    display: grid;
    grid-template-columns: 528fr 86px 264fr 264fr 101px;
    grid-template-rows: 13px 13px;
    row-gap: 4px;
    padding: 6px 18px 4px 7px;
    border-top: 1px solid #bbb;
    background: linear-gradient(#fdfdfd 2px, #d8d8d8 2px, #d8d8d8 5px, #fdfdfd 26px);
    text-align: center;
    font-size: 10px;
    line-height: 12px;
}
.field {
    border: 1px solid #bbb;
    border-radius: 2px;
    background: #e6e6e6;
}
.field + .field {
    margin-left: 4px;
}
.logo {
    grid-column: 5;
    grid-row: 1 / 3;
    display: flex;
    align-items: center;
    justify-content: flex-end;
    gap: 2px;
    font-family: "Open Sans", sans-serif;
    color: #999;
}
.logo strong {
    font-size: 22px;
    font-weight: 800;
}
.product {
    display: flex;
    flex-direction: column;
    font-size: 8px;
    line-height: 11px;
    text-align: left;
}
.product b {
    color: #f0ab00;
    font-size: 13px;
    line-height: 14px;
}
.grip {
    position: absolute;
    right: 1px;
    bottom: 1px;
    width: 12px;
    height: 12px;
}
```
